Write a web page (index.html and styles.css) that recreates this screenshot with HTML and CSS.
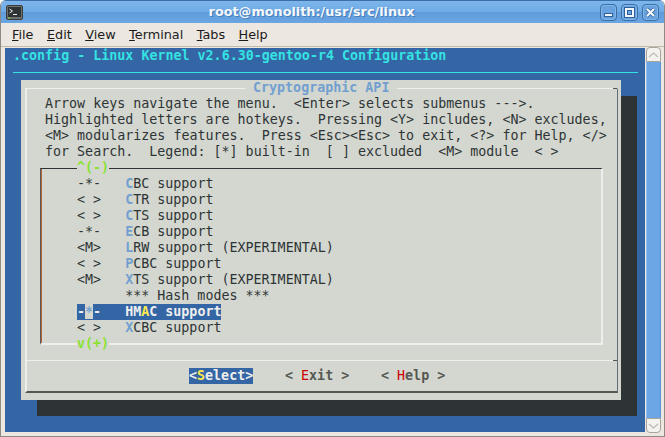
FILE: index.html
```html
<!DOCTYPE html>
<html lang="en">
<head>
<meta charset="utf-8">
<title>root@monolith:/usr/src/linux</title>
<link rel="stylesheet" href="styles.css">
</head>
<body>
<div class="window">
  <header class="titlebar">
    <svg class="app-icon" width="17" height="15" viewBox="0 0 17 15"><rect x="0.5" y="0.5" width="16" height="14" rx="1.500" fill="#6f716c" stroke="#3a3d3a"/><rect x="2" y="2" width="13" height="10" fill="#2e3436"/><rect x="2" y="12.500" width="2" height="1" fill="#8ae234"/><path d="M3.500 4l3 2-3 2" fill="none" stroke="#eeeeec"/><path d="M7 9.500h4" stroke="#eeeeec"/></svg>
    <span class="title-text">root@monolith:/usr/src/linux</span>
    <div class="win-buttons">
      <button class="win-btn"><svg width="11" height="11" viewBox="0 0 11 11"><rect x="1.500" y="6.500" width="8" height="3" fill="#f2f6fb" stroke="#2f5f98"/></svg></button>
      <button class="win-btn"><svg width="11" height="11" viewBox="0 0 11 11"><rect x="1" y="1" width="9" height="9" fill="#f2f6fb"/><rect x="3.500" y="3.500" width="4" height="4" fill="#6ca6e3" stroke="#2f5f98"/><rect x="0.500" y="0.500" width="10" height="10" fill="none" stroke="#2f5f98"/></svg></button>
      <button class="win-btn"><svg width="11" height="11" viewBox="0 0 11 11"><path d="M2 2l7 7M9 2l-7 7" stroke="#2f5f98" stroke-width="3.600"/><path d="M2 2l7 7M9 2l-7 7" stroke="#f6f9fc" stroke-width="2.200"/></svg></button>
    </div>
  </header>
  <nav class="menubar">
    <span class="menu-item"><u>F</u>ile</span>
    <span class="menu-item"><u>E</u>dit</span>
    <span class="menu-item"><u>V</u>iew</span>
    <span class="menu-item"><u>T</u>erminal</span>
    <span class="menu-item"><u>T</u>abs</span>
    <span class="menu-item"><u>H</u>elp</span>
  </nav>
  <div class="content">
    <main class="terminal">
      <div class="row cfg-title">.config - Linux Kernel v2.6.30-gentoo-r4 Configuration</div>
      <div class="cfg-rule"></div>
      <section class="dialog">
        <div class="frame">
          <div class="row dlg-title"><span class="dlg-label">Cryptographic API</span></div>
          <div class="row help">Arrow keys navigate the menu.  &lt;Enter&gt; selects submenus ---&gt;.</div>
          <div class="row help">Highlighted letters are hotkeys.  Pressing &lt;Y&gt; includes, &lt;N&gt; excludes,</div>
          <div class="row help">&lt;M&gt; modularizes features.  Press &lt;Esc&gt;&lt;Esc&gt; to exit, &lt;?&gt; for Help, &lt;/&gt;</div>
          <div class="row help">for Search.  Legend: [*] built-in  [ ] excluded  &lt;M&gt; module  &lt; &gt;</div>
          <div class="menu-box">
            <div class="row arrow top-arrow"><span class="arrow-label">^(-)</span></div>
            <div class="row item">-*-   <b class="hot">C</b>BC support</div>
            <div class="row item">&lt; &gt;   <b class="hot">C</b>TR support</div>
            <div class="row item">&lt; &gt;   <b class="hot">C</b>TS support</div>
            <div class="row item">-*-   <b class="hot">E</b>CB support</div>
            <div class="row item">&lt;M&gt;   <b class="hot">L</b>RW support (EXPERIMENTAL)</div>
            <div class="row item">&lt; &gt;   <b class="hot">P</b>CBC support</div>
            <div class="row item">&lt;M&gt;   <b class="hot">X</b>TS support (EXPERIMENTAL)</div>
            <div class="row item">      *** Hash modes ***</div>
            <div class="row item"><span class="sel">-<span class="sel-star">*</span>-   HM<span class="sel-hot">A</span>C support</span></div>
            <div class="row item">&lt; &gt;   <b class="hot">X</b>CBC support</div>
            <div class="row arrow"><span class="arrow-label">v(+)</span></div>
          </div>
          <div class="buttons">
            <span class="btn btn-on">&lt;<span class="sel-hot">S</span>elect&gt;</span>
            <span class="btn">&lt; <span class="red">E</span>xit &gt;</span>
            <span class="btn">&lt; <span class="red">H</span>elp &gt;</span>
          </div>
        </div>
      </section>
    </main>
    <aside class="scrollbar">
      <div class="arrow-btn arrow-up"><svg width="11" height="6" viewBox="0 0 11 6"><path d="M1 5l4.500-4 4.500 4" fill="none" stroke="#babdb6" stroke-width="1.300"/></svg></div>
      <div class="trough"></div>
      <div class="arrow-btn arrow-down"><svg width="11" height="6" viewBox="0 0 11 6"><path d="M1 1l4.500 4 4.500-4" fill="none" stroke="#babdb6" stroke-width="1.300"/></svg></div>
    </aside>
  </div>
</div>
</body>
</html>
```

FILE: styles.css
```css
* { box-sizing: border-box; }
html, body { margin: 0; padding: 0; }
body { width: 665px; height: 437px; overflow: hidden; background: #fff; }
.window {
  width: 665px; height: 437px;
  display: flex; flex-direction: column;
  background: #ece8e1;
  border: 1px solid #8f8b83; border-top: 0;
  border-radius: 6px 6px 0 0;
  overflow: hidden;
}
.titlebar {
  height: 23px; flex: none;
  display: flex; align-items: center;
  padding: 0 5px 0 5px;
  background: linear-gradient(#7db6ec 0, #6eaae5 48%, #5f9bdb 50%, #6ba6e3 100%);
  border-top: 1px solid #3c6ea8;
}
.app-icon { flex: none; }
.title-text {
  flex: 1;
  text-align: center;
  font: bold 12.8px/16px "DejaVu Sans", sans-serif;
  color: #f4f8fc;
  text-shadow: 1px 1px 0 #4a7fb8;
}
.win-buttons { display: flex; gap: 4px; }
.win-btn {
  width: 17px; height: 17px; padding: 0;
  display: flex; align-items: center; justify-content: center;
  background: #68a3df; border: 1px solid #3a6ea5; border-radius: 4px;
  box-shadow: inset 0 0 0 1px #82b6ea;
}
.menubar {
  height: 24px; flex: none;
  display: flex; align-items: center; gap: 13.5px;
  padding: 0 11px;
  background: #ece8e1;
  border-bottom: 1px solid #c4baa9;
  font: 12.8px/16px "DejaVu Sans", sans-serif;
  color: #1a1a1a;
}
.content { display: flex; flex: 1; min-height: 0; padding: 0 0 0 4px; }
.terminal {
  width: 640px; height: 384px; flex: none;
  margin-top: 1px;
  background: #3465a4;
  font: 13.33px/16px "DejaVu Sans Mono", monospace;
  color: #2e3436;
  overflow: hidden;
}
.row { height: 16px; white-space: pre; }
.cfg-title { padding-left: 8px; color: #34e2e2; font-weight: bold; }
.cfg-rule { width: 625px; height: 1px; margin: 8px 0 7px 8px; background: #34e2e2; }
.dialog {
  width: 600px; height: 320px; margin-left: 16px;
  background: #d3d7cf;
  box-shadow: 16px 16px 0 #2e3436;
  padding: 8px 3px 0 4px;
}
.frame {
  height: 305px;
  position: relative;
  border-style: solid;
  border-width: 1px 1px 2px 2px;
  border-color: #eeeeec #5f6f7a #555753 #eeeeec;
}
.frame::after {
  content: ""; position: absolute; top: -1px; right: 0;
  width: 4px; height: 1px; background: #555753;
}
.dlg-title { margin-top: -9px; padding-left: 218px; }
.dlg-label { display: inline-block; padding: 0 8px; background: #d3d7cf; color: #729fcf; font-weight: bold; }
.help { padding-left: 18px; }
.menu-box {
  width: 563px; height: 177px;
  margin: 8px 0 0 13px;
  padding-left: 36px;
  border-style: solid;
  border-width: 1px 2px 2px 1px;
  border-color: #2e3436 #eeeeec #eeeeec #5a5a58;
  box-shadow: inset 1px 0 0 #b5653a;
}
.arrow-label { display: inline-block; background: #d3d7cf; color: #8ae234; font-weight: bold; }
.top-arrow { margin-top: -9px; }
.sel-star, .hot { color: #729fcf; }
.hot { font-weight: bold; }
.sel { display: inline-block; background: #3465a4; color: #eeeeec; font-weight: bold; }
.sel-star { background: #d3d7cf; }
.sel-hot { color: #fce94f; }
.buttons {
  position: relative;
  display: flex; gap: 32px;
  margin-top: 15px; padding: 7px 0 0 162px;
  border-top: 1px solid #eeeeec;
}
.buttons::after {
  content: ""; position: absolute; top: -1px; right: 0;
  width: 4px; height: 1px; background: #555753;
}
.btn { width: 64px; height: 16px; color: #555753; font-weight: bold; white-space: pre; }
.btn-on { background: #3465a4; color: #eeeeec; }
.red { color: #c00; font-weight: normal; }
.scrollbar { width: 15px; margin-left: 1px; display: flex; flex-direction: column; height: 386px; }
.arrow-btn {
  height: 15px; flex: none;
  background: #f4f2ee; border: 1px solid #a8a49c;
  display: flex; align-items: center; justify-content: center;
}
.arrow-up { border-radius: 4px 4px 0 0; }
.arrow-down { border-radius: 0 0 4px 4px; }
.trough { flex: 1; background: #6ca6e4; box-shadow: inset 1px 0 0 #8fc0f0, inset -1px 0 0 #5a94d4; }
```
